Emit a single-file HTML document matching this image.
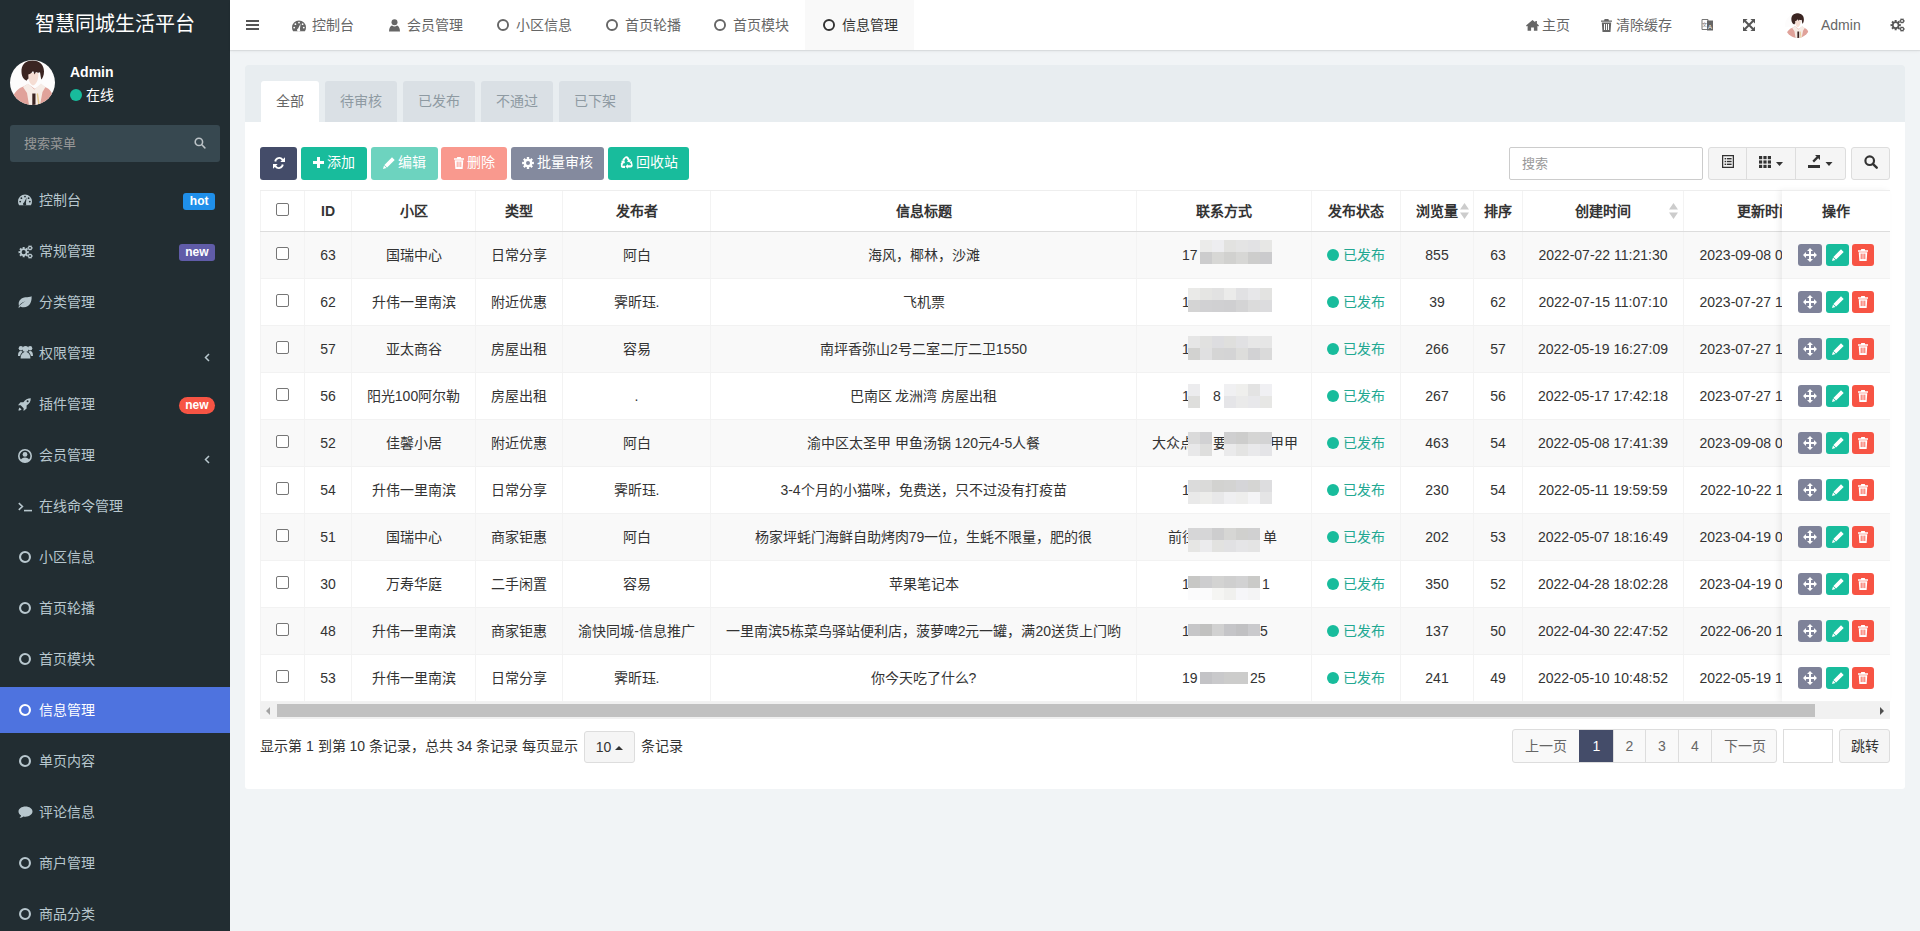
<!DOCTYPE html><html lang="zh-CN"><head><meta charset="utf-8"><title>信息管理</title><style>*{box-sizing:border-box;margin:0;padding:0}
html,body{width:1920px;height:931px;overflow:hidden}
body{font-family:"Liberation Sans",sans-serif;font-size:14px;color:#333;background:#f1f4f6;position:relative}
.abs{position:absolute}
svg{display:block}
#sb{position:absolute;left:0;top:0;width:230px;height:931px;background:#222d32}
#logo{position:absolute;left:0;top:0;width:230px;height:50px;color:#fff;font-size:20px;text-align:center;line-height:49px}
#avatar{position:absolute;left:10px;top:60px;width:45px;height:45px;border-radius:50%;overflow:hidden}
#uname{position:absolute;left:70px;top:63px;color:#fff;font-weight:bold;font-size:14px;line-height:18px}
#ustat{position:absolute;left:70px;top:86px;color:#fff;font-size:14px;line-height:18px}
#ustat i{display:inline-block;width:12px;height:12px;border-radius:50%;background:#18bc9c;margin-right:4px;vertical-align:-1px}
#sbsearch{position:absolute;left:10px;top:125px;width:210px;height:37px;background:#374850;border-radius:3px;color:#999;font-size:13px;line-height:37px}
#sbsearch span{position:absolute;left:14px;top:0}
#sbsearch b{position:absolute;left:184px;top:12px}
.mi{position:absolute;left:0;width:230px;height:46px;color:#b8c7ce;font-size:14px;line-height:47px}
.mi .ic{position:absolute;left:18px;top:17px}
.mi .icc{left:19px;top:17px}
.mi .tx{position:absolute;left:39px;top:0}
.mi.active{background:#4e73df;color:#fff}
.badge{position:absolute;right:15px;top:16px;height:17px;line-height:17px;color:#fff;font-weight:bold;font-size:12px;padding:0 6.5px;border-radius:3px}
.badge.pill{border-radius:9px}
.chev{position:absolute;left:204px;top:23px}
#hd{position:absolute;left:230px;top:0;width:1690px;height:50px;background:#fff;box-shadow:0 1px 1px rgba(0,0,0,.075),0 2px 3px rgba(0,0,0,.03)}
.nv{position:absolute;top:0;height:50px;line-height:50px;color:#666;font-size:14px}
#panel{position:absolute;left:245px;top:65px;width:1660px;height:724px;background:#fff;border-radius:3px}
#ph{position:absolute;left:0;top:0;width:1660px;height:57px;background:#e8edf0;border-radius:3px 3px 0 0}
.tab{position:absolute;top:16px;height:41px;line-height:41px;text-align:center;color:#8e9aa2;background:#dae0e5;font-size:14px;border-radius:3px 3px 0 0}
.tab.on{background:#fff;color:#666}
.btn{position:absolute;top:82px;height:33px;line-height:33px;color:#fff;border-radius:3px;font-size:14px;white-space:nowrap}
.btn svg{display:inline-block;vertical-align:-1px}
table{border-collapse:collapse;table-layout:fixed;position:absolute}
td,th{text-align:center;font-size:14px;white-space:nowrap;overflow:hidden;border-left:1px solid #f0f0f0}
.bin{position:absolute;left:0;top:-1px;width:100%;height:100%;display:flex;align-items:center;justify-content:center}
.bi{display:block}
.bl{display:block;margin-left:3px}
.sinput{position:absolute;top:82px;width:194px;height:33px;border:1px solid #ccc;border-radius:2px;color:#999;line-height:31px;padding-left:12px;background:#fff;font-size:13px}
.bgrp{position:absolute;top:82px;height:33px;border:1px solid #ddd;border-radius:3px;background:#f5f5f5}
.bgrp i{position:absolute;top:0;width:1px;height:31px;background:#ddd}
#tbl{position:absolute;width:1630px;height:512px}
.tr{position:absolute;left:0;width:1630px;height:47px;border-bottom:1px solid #f2f2f2;background:#fff}
.tr.odd{background:#f9f9f9}
.tr.th{height:42px;border-top:1px solid #eee;border-bottom:1px solid #ddd;font-weight:bold}
.td{position:absolute;top:0;height:100%;border-left:1px solid #f3f3f3;text-align:center;white-space:nowrap;overflow:hidden;line-height:46px}
.th .td{line-height:40px}
.cb{position:absolute;left:15px;top:15px;width:13px;height:13px;border:1px solid #767676;border-radius:2px;background:#fff}
.ph{position:relative}
.blur{display:inline-block;width:70px;height:24px;vertical-align:middle;background:#e2e2e2}
.st{color:#22a892}
.st i{display:inline-block;width:12px;height:12px;border-radius:50%;background:#18bc9c;margin-right:4px;vertical-align:-1px}
#tblx{position:absolute;width:1630px;height:512px}
.sarr{position:absolute}
#fixc{position:absolute;top:0;width:108px;height:512px;background:#fff;box-shadow:-3px 0 6px rgba(0,0,0,.06)}
.fh{position:absolute;left:0;top:0;width:108px;height:42px;line-height:40px;text-align:center;font-weight:bold;border-top:1px solid #eee;border-bottom:1px solid #ddd;background:#fff}
.fr{position:absolute;left:0;width:108px;height:47px;border-bottom:1px solid #f2f2f2}
.ab{position:absolute;top:12px;height:22px;border-radius:3px;display:flex;align-items:center;justify-content:center}
#sbar{position:absolute;width:1630px;height:17px;background:#f1f1f1}
#sbar .thumb{position:absolute;left:17px;top:2px;width:1538px;height:13px;background:#c1c1c1}
#sbar .sl{position:absolute;left:6px;top:5px;width:0;height:0;border-top:4px solid transparent;border-bottom:4px solid transparent;border-right:4px solid #a3a3a3}
#sbar .sr{position:absolute;right:6px;top:5px;width:0;height:0;border-top:4px solid transparent;border-bottom:4px solid transparent;border-left:4px solid #505050}
#pinfo{position:absolute;height:33px;line-height:31px;white-space:nowrap}
.psz{display:inline-block;width:51px;height:32px;border:1px solid #ddd;border-radius:3px;background:#f5f5f5;text-align:center;line-height:30px;vertical-align:middle;margin:0 2px}
.psz b{display:inline-block;border-left:4px solid transparent;border-right:4px solid transparent;border-bottom:4px solid #333;vertical-align:2px}
#pgn{position:absolute;left:1267px;top:664px;width:265px;height:34px;border:1px solid #ddd;border-radius:3px;background:#f9f9f9;overflow:hidden}
.pg{position:absolute;top:0;height:32px;line-height:32px;text-align:center;border-left:1px solid #ddd;color:#666}
.pg:first-child{border-left:none}
.pg.on{background:#444c69;color:#fff;border-color:#444c69}
#pjump{position:absolute;top:664px;width:50px;height:34px;border:1px solid #ddd;background:#fff}
#pjbtn{position:absolute;top:664px;width:51px;height:34px;border:1px solid #ddd;border-radius:3px;background:#f5f5f5;text-align:center;line-height:32px;color:#333}
.pht{position:absolute;height:46px;line-height:46px;white-space:nowrap}
.mos{position:absolute;width:12px;height:12px}
.mi .ic-group{top:15px}
</style></head><body><div id="sb"><div id="logo">智慧同城生活平台</div><div id="avatar"><svg width="45" height="45" viewBox="0 0 45 45" style="display:block"><rect width="45" height="45" fill="#fdfcfc"/><path d="M18 13c0 7 2 11.5 5 12.5 3-1 5.5-5 5.5-12.5z" fill="#f5ddd3"/><path d="M11.5 12C11 5 15.5.6 22.5.6S34 5 34 11.5c0 3.8-1.2 6.5-2.8 8l-1.2-7.2c-1.3.6-2.7.5-4-.3l-1.6 2.6c-.3-1.6-.8-2.8-1.5-3.5-.9 1.8-2.6 3-4.6 3.5l.2 3.8c-.8.4-1.5 1.3-1.8 2.4C13 19 11.7 15.8 11.5 12z" fill="#3b2522"/><path d="M3 37c1.5-5 5.5-9 10.5-10.5L18 24l7 5 6-4.5 4 2.5c4.5 1.5 7 5 8 10V45H3z" fill="#e0a29a"/><path d="M13 27l5-3.5 6.5 6 6.5-6 4.5 3.5-3 5-2.5 13h-11l-2-12z" fill="#f6ece6"/><path d="M22.3 33.5h3.2v11.5h-3.2z" fill="#3a2422"/><path d="M28 33l1.8 12h-1.6l-1.5-11z" fill="#e6c98f"/></svg>
</div><div id="uname">Admin</div><div id="ustat"><i></i>在线</div><div id="sbsearch"><span>搜索菜单</span><b><svg width="12" height="12" viewBox="0 0 13 13" fill="currentColor"  style="display:block"><circle cx="5.3" cy="5.3" r="4" fill="none" stroke="#bcc3c7" stroke-width="1.7"/><path d="M8.2 8.2l3.6 3.6" stroke="#bcc3c7" stroke-width="1.6" stroke-linecap="round"/></svg></b></div><div class="mi" style="top:177px"><span class="ic ic-dash"><svg width="14" height="12" viewBox="0 0 14 12" fill="currentColor"  style="display:block"><path d="M7 0.5A7 7 0 0 0 0 7.5c0 1.4.4 2.7 1.1 3.8h11.8A7 7 0 0 0 14 7.5 7 7 0 0 0 7 .5z" fill="#b8c7ce"/><g fill="#222d32"><circle cx="7" cy="2.6" r=".9"/><circle cx="3.4" cy="4.2" r=".9"/><circle cx="2.2" cy="7.6" r=".9"/><circle cx="11.8" cy="7.6" r=".9"/><circle cx="10.6" cy="4.2" r=".9"/><path d="M8.6 3.6 6.1 8.6a1.5 1.5 0 1 0 1.8.6z"/></g></svg></span><span class="tx">控制台</span><span class="badge" style="background:#1f8fea">hot</span></div><div class="mi" style="top:228px"><span class="ic ic-cogs"><svg width="15" height="14" viewBox="0 0 15 14.5" fill="currentColor"  style="display:block"><path d="M9.47 6.41 L10.89 6.30 L10.89 8.50 L9.47 8.39 L9.04 9.44 L10.11 10.36 L8.56 11.91 L7.64 10.84 L6.59 11.27 L6.70 12.69 L4.50 12.69 L4.61 11.27 L3.56 10.84 L2.64 11.91 L1.09 10.36 L2.16 9.44 L1.73 8.39 L0.31 8.50 L0.31 6.30 L1.73 6.41 L2.16 5.36 L1.09 4.44 L2.64 2.89 L3.56 3.96 L4.61 3.53 L4.50 2.11 L6.70 2.11 L6.59 3.53 L7.64 3.96 L8.56 2.89 L10.11 4.44 L9.04 5.36ZM7.70 7.40A2.1 2.1 0 1 0 3.50 7.40A2.1 2.1 0 1 0 7.70 7.40ZM14.18 2.29 L14.89 2.22 L14.89 3.78 L14.18 3.71 L13.80 4.36 L14.22 4.94 L12.87 5.72 L12.57 5.07 L11.83 5.07 L11.53 5.72 L10.18 4.94 L10.60 4.36 L10.22 3.71 L9.51 3.78 L9.51 2.22 L10.22 2.29 L10.60 1.64 L10.18 1.06 L11.53 0.28 L11.83 0.93 L12.57 0.93 L12.87 0.28 L14.22 1.06 L13.80 1.64ZM13.20 3.00A1.0 1.0 0 1 0 11.20 3.00A1.0 1.0 0 1 0 13.20 3.00ZM14.18 10.69 L14.89 10.62 L14.89 12.18 L14.18 12.11 L13.80 12.76 L14.22 13.34 L12.87 14.12 L12.57 13.47 L11.83 13.47 L11.53 14.12 L10.18 13.34 L10.60 12.76 L10.22 12.11 L9.51 12.18 L9.51 10.62 L10.22 10.69 L10.60 10.04 L10.18 9.46 L11.53 8.68 L11.83 9.33 L12.57 9.33 L12.87 8.68 L14.22 9.46 L13.80 10.04ZM13.20 11.40A1.0 1.0 0 1 0 11.20 11.40A1.0 1.0 0 1 0 13.20 11.40Z" fill="#b8c7ce" fill-rule="evenodd"/></svg></span><span class="tx">常规管理</span><span class="badge" style="background:#605ca8">new</span></div><div class="mi" style="top:279px"><span class="ic ic-leaf"><svg width="14" height="12" viewBox="0 0 14 12" fill="currentColor"  style="display:block"><path d="M13.6.3C12 1.5 9.6 1 7.5 1.3 3.5 1.8.7 4.3.7 8c0 .7.1 1.3.3 1.9C1.7 8.6 3.6 6.4 7.5 5.2 4.3 6.8 2 9 .3 11.2l.8.6 1.2-1.4C3.4 11 4.6 11.3 6 11.3 11.4 11.3 14 6.2 13.6.3z" fill="#b8c7ce"/></svg></span><span class="tx">分类管理</span></div><div class="mi" style="top:330px"><span class="ic ic-group"><svg width="15" height="14" viewBox="0 0 15 14" fill="currentColor"  style="display:block"><g fill="#b8c7ce"><circle cx="7.5" cy="4" r="3"/><path d="M2.6 13.6c0-4.2 2-6.6 4.9-6.6s4.9 2.4 4.9 6.6z"/><circle cx="2.9" cy="3.2" r="2.2"/><circle cx="12.1" cy="3.2" r="2.2"/><path d="M0 11c0-3 1-4.9 2.9-4.9.8 0 1.4.3 1.8.6C3.3 7.8 2.4 9.3 2.2 11z"/><path d="M15 11c0-3-1-4.9-2.9-4.9-.8 0-1.4.3-1.8.6 1.4 1.1 2.3 2.6 2.5 4.3z"/></g></svg></span><span class="tx">权限管理</span><span class="chev"><svg width="6" height="9" viewBox="0 0 6 9"><path d="M5 1 1.5 4.5 5 8" fill="none" stroke="#b8c7ce" stroke-width="1.5"/></svg></span></div><div class="mi" style="top:381px"><span class="ic ic-rocket"><svg width="13" height="13" viewBox="0 0 13 13" fill="currentColor"  style="display:block"><path d="M12.8.2C9.5.2 7.3 1.6 5.4 4.3H2.5L0 7.3h2.6l3 3v2.6l3-2.5V7.5C11.4 5.6 12.8 3.5 12.8.2zM9.6 2.3a1 1 0 1 1 0 2 1 1 0 0 1 0-2zM1.6 9.4c-.8.8-1.2 2.9-1.2 3.2.3 0 2.4-.4 3.2-1.2z" fill="#b8c7ce"/></svg></span><span class="tx">插件管理</span><span class="badge pill" style="background:#f75444">new</span></div><div class="mi" style="top:432px"><span class="ic ic-ucirc"><svg width="14" height="14" viewBox="0 0 14 14" fill="currentColor"  style="display:block"><circle cx="7" cy="7" r="6.2" fill="none" stroke="#b8c7ce" stroke-width="1.6"/><circle cx="7" cy="5.4" r="2.4" fill="#b8c7ce"/><path d="M2.6 11.2C3.3 9.4 5 8.4 7 8.4s3.7 1 4.4 2.8A6 6 0 0 1 7 13.2a6 6 0 0 1-4.4-2z" fill="#b8c7ce"/></svg></span><span class="tx">会员管理</span><span class="chev"><svg width="6" height="9" viewBox="0 0 6 9"><path d="M5 1 1.5 4.5 5 8" fill="none" stroke="#b8c7ce" stroke-width="1.5"/></svg></span></div><div class="mi" style="top:483px"><span class="ic ic-term"><svg width="15" height="12" viewBox="0 0 15 12" fill="currentColor"  style="display:block"><path d="M.8 3.2l3.6 3.3-3.6 3.3" fill="none" stroke="#b8c7ce" stroke-width="1.6"/><rect x="6" y="9.8" width="8" height="1.6" fill="#b8c7ce"/></svg></span><span class="tx">在线命令管理</span></div><div class="mi" style="top:534px"><span class="ic icc"><svg width="12" height="12" viewBox="0 0 12 12" fill="currentColor"  style="display:block"><circle cx="6.0" cy="6.0" r="4.95" fill="none" stroke="#b8c7ce" stroke-width="2.1"/></svg></span><span class="tx">小区信息</span></div><div class="mi" style="top:585px"><span class="ic icc"><svg width="12" height="12" viewBox="0 0 12 12" fill="currentColor"  style="display:block"><circle cx="6.0" cy="6.0" r="4.95" fill="none" stroke="#b8c7ce" stroke-width="2.1"/></svg></span><span class="tx">首页轮播</span></div><div class="mi" style="top:636px"><span class="ic icc"><svg width="12" height="12" viewBox="0 0 12 12" fill="currentColor"  style="display:block"><circle cx="6.0" cy="6.0" r="4.95" fill="none" stroke="#b8c7ce" stroke-width="2.1"/></svg></span><span class="tx">首页模块</span></div><div class="mi active" style="top:687px"><span class="ic icc"><svg width="12" height="12" viewBox="0 0 12 12" fill="currentColor"  style="display:block"><circle cx="6.0" cy="6.0" r="4.95" fill="none" stroke="#fff" stroke-width="2.1"/></svg></span><span class="tx">信息管理</span></div><div class="mi" style="top:738px"><span class="ic icc"><svg width="12" height="12" viewBox="0 0 12 12" fill="currentColor"  style="display:block"><circle cx="6.0" cy="6.0" r="4.95" fill="none" stroke="#b8c7ce" stroke-width="2.1"/></svg></span><span class="tx">单页内容</span></div><div class="mi" style="top:789px"><span class="ic ic-comment"><svg width="15" height="12" viewBox="0 0 15 12" fill="currentColor"  style="display:block"><path d="M7.5.5C3.6.5.5 2.8.5 5.6c0 1.6 1 3 2.6 4-.2.9-.8 1.6-1.6 2.1 1.6 0 3-.6 3.9-1.3.7.2 1.4.3 2.1.3 3.9 0 7-2.3 7-5.1S11.4.5 7.5.5z" fill="#b8c7ce"/></svg></span><span class="tx">评论信息</span></div><div class="mi" style="top:840px"><span class="ic icc"><svg width="12" height="12" viewBox="0 0 12 12" fill="currentColor"  style="display:block"><circle cx="6.0" cy="6.0" r="4.95" fill="none" stroke="#b8c7ce" stroke-width="2.1"/></svg></span><span class="tx">商户管理</span></div><div class="mi" style="top:891px"><span class="ic icc"><svg width="12" height="12" viewBox="0 0 12 12" fill="currentColor"  style="display:block"><circle cx="6.0" cy="6.0" r="4.95" fill="none" stroke="#b8c7ce" stroke-width="2.1"/></svg></span><span class="tx">商品分类</span></div></div><div id="hd"><div class="abs" style="left:16px;top:20px"><svg width="13" height="10" viewBox="0 0 13 10" fill="#555"  style="display:block"><rect x="0" y="0" width="13" height="2"/><rect x="0" y="4" width="13" height="2"/><rect x="0" y="8" width="13" height="2"/></svg></div><div class="abs hdact" style="left:575px;top:0;width:109px;height:50px;background:#f9f9f9"></div><div class="abs" style="left:62px;top:20px"><svg width="14" height="12" viewBox="0 0 14 12" fill="currentColor"  style="display:block"><path d="M7 0.5A7 7 0 0 0 0 7.5c0 1.4.4 2.7 1.1 3.8h11.8A7 7 0 0 0 14 7.5 7 7 0 0 0 7 .5z" fill="#666"/><g fill="#fff"><circle cx="7" cy="2.6" r=".9"/><circle cx="3.4" cy="4.2" r=".9"/><circle cx="2.2" cy="7.6" r=".9"/><circle cx="11.8" cy="7.6" r=".9"/><circle cx="10.6" cy="4.2" r=".9"/><path d="M8.6 3.6 6.1 8.6a1.5 1.5 0 1 0 1.8.6z"/></g></svg></div><div class="nv" style="left:82px;color:#666">控制台</div><div class="abs" style="left:159px;top:19px"><svg width="11" height="13" viewBox="0 0 11 13" fill="currentColor"  style="display:block"><circle cx="5.5" cy="3.3" r="3" fill="#666"/><path d="M0 12.5c0-3.4 1.6-5.6 3-5.9.8.6 1.6.9 2.5.9s1.7-.3 2.5-.9c1.4.3 3 2.5 3 5.9z" fill="#666"/></svg></div><div class="nv" style="left:177px;color:#666">会员管理</div><div class="abs" style="left:267px;top:19px"><svg width="12" height="12" viewBox="0 0 12 12" fill="currentColor"  style="display:block"><circle cx="6.0" cy="6.0" r="5.05" fill="none" stroke="#666" stroke-width="1.9"/></svg></div><div class="nv" style="left:286px;color:#666">小区信息</div><div class="abs" style="left:376px;top:19px"><svg width="12" height="12" viewBox="0 0 12 12" fill="currentColor"  style="display:block"><circle cx="6.0" cy="6.0" r="5.05" fill="none" stroke="#666" stroke-width="1.9"/></svg></div><div class="nv" style="left:395px;color:#666">首页轮播</div><div class="abs" style="left:484px;top:19px"><svg width="12" height="12" viewBox="0 0 12 12" fill="currentColor"  style="display:block"><circle cx="6.0" cy="6.0" r="5.05" fill="none" stroke="#666" stroke-width="1.9"/></svg></div><div class="nv" style="left:503px;color:#666">首页模块</div><div class="abs" style="left:593px;top:19px"><svg width="12" height="12" viewBox="0 0 12 12" fill="currentColor"  style="display:block"><circle cx="6.0" cy="6.0" r="5.05" fill="none" stroke="#333" stroke-width="1.9"/></svg></div><div class="nv" style="left:612px;color:#333">信息管理</div><div class="abs" style="left:1296px;top:20px"><svg width="13" height="11" viewBox="0 0 13 11" fill="currentColor"  style="display:block"><path d="M6.5 1.6 1.6 5.7v5h3.5V7.6h2.8v3.1h3.5v-5zM6.5 0 0 5.4l.8 1 5.7-4.8 5.7 4.8.8-1L10.9 3.6V1H9.3v1.3z" fill="#666"/></svg></div><div class="nv" style="left:1312px">主页</div><div class="abs" style="left:1371px;top:19px"><svg width="11" height="13" viewBox="0 0 11 13" fill="currentColor"  style="display:block"><path d="M3.6 0h3.8l.5 1.4H11v1.4H0V1.4h3.1zM.8 3.6h9.4l-.7 9.4h-8z" fill="#666"/><g fill="#fff"><rect x="3" y="5" width="1" height="6"/><rect x="5" y="5" width="1" height="6"/><rect x="7" y="5" width="1" height="6"/></g></svg></div><div class="nv" style="left:1386px">清除缓存</div><div class="abs" style="left:1471px;top:18px"><svg width="13" height="14" viewBox="0 0 13 14" fill="currentColor"  style="display:block"><path d="M1 1.5h6v10H1z" fill="#fff" stroke="#777" stroke-width="1"/><path d="M6 2.5h6v10H6z" fill="#666"/><text x="9" y="10.5" font-size="6" fill="#fff" text-anchor="middle" font-family="Liberation Sans">A</text><text x="3.8" y="7.5" font-size="5" fill="#777" text-anchor="middle" font-family="Liberation Sans">文</text></svg></div><div class="abs" style="left:1513px;top:19px"><svg width="12" height="12" viewBox="0 0 12 12" fill="currentColor"  style="display:block"><g fill="#555"><path d="M0 0h4.6L0 4.6z"/><path d="M12 0v4.6L7.4 0z"/><path d="M0 12V7.4L4.6 12z"/><path d="M12 12H7.4L12 7.4z"/></g><path d="M2 2l8 8M10 2l-8 8" stroke="#555" stroke-width="2"/></svg></div><div class="abs" style="left:1555px;top:13px;width:25px;height:25px;border-radius:50%;overflow:hidden"><svg width="25" height="25" viewBox="0 0 45 45" style="display:block"><rect width="25" height="25" fill="#fdfcfc"/><path d="M18 13c0 7 2 11.5 5 12.5 3-1 5.5-5 5.5-12.5z" fill="#f5ddd3"/><path d="M11.5 12C11 5 15.5.6 22.5.6S34 5 34 11.5c0 3.8-1.2 6.5-2.8 8l-1.2-7.2c-1.3.6-2.7.5-4-.3l-1.6 2.6c-.3-1.6-.8-2.8-1.5-3.5-.9 1.8-2.6 3-4.6 3.5l.2 3.8c-.8.4-1.5 1.3-1.8 2.4C13 19 11.7 15.8 11.5 12z" fill="#3b2522"/><path d="M3 37c1.5-5 5.5-9 10.5-10.5L18 24l7 5 6-4.5 4 2.5c4.5 1.5 7 5 8 10V45H3z" fill="#e0a29a"/><path d="M13 27l5-3.5 6.5 6 6.5-6 4.5 3.5-3 5-2.5 13h-11l-2-12z" fill="#f6ece6"/><path d="M22.3 33.5h3.2v11.5h-3.2z" fill="#3a2422"/><path d="M28 33l1.8 12h-1.6l-1.5-11z" fill="#e6c98f"/></svg>
</div><div class="nv" style="left:1591px">Admin</div><div class="abs" style="left:1660px;top:18px"><svg width="15" height="14" viewBox="0 0 15 14.5" fill="currentColor"  style="display:block"><path d="M9.47 6.41 L10.89 6.30 L10.89 8.50 L9.47 8.39 L9.04 9.44 L10.11 10.36 L8.56 11.91 L7.64 10.84 L6.59 11.27 L6.70 12.69 L4.50 12.69 L4.61 11.27 L3.56 10.84 L2.64 11.91 L1.09 10.36 L2.16 9.44 L1.73 8.39 L0.31 8.50 L0.31 6.30 L1.73 6.41 L2.16 5.36 L1.09 4.44 L2.64 2.89 L3.56 3.96 L4.61 3.53 L4.50 2.11 L6.70 2.11 L6.59 3.53 L7.64 3.96 L8.56 2.89 L10.11 4.44 L9.04 5.36ZM7.70 7.40A2.1 2.1 0 1 0 3.50 7.40A2.1 2.1 0 1 0 7.70 7.40ZM14.18 2.29 L14.89 2.22 L14.89 3.78 L14.18 3.71 L13.80 4.36 L14.22 4.94 L12.87 5.72 L12.57 5.07 L11.83 5.07 L11.53 5.72 L10.18 4.94 L10.60 4.36 L10.22 3.71 L9.51 3.78 L9.51 2.22 L10.22 2.29 L10.60 1.64 L10.18 1.06 L11.53 0.28 L11.83 0.93 L12.57 0.93 L12.87 0.28 L14.22 1.06 L13.80 1.64ZM13.20 3.00A1.0 1.0 0 1 0 11.20 3.00A1.0 1.0 0 1 0 13.20 3.00ZM14.18 10.69 L14.89 10.62 L14.89 12.18 L14.18 12.11 L13.80 12.76 L14.22 13.34 L12.87 14.12 L12.57 13.47 L11.83 13.47 L11.53 14.12 L10.18 13.34 L10.60 12.76 L10.22 12.11 L9.51 12.18 L9.51 10.62 L10.22 10.69 L10.60 10.04 L10.18 9.46 L11.53 8.68 L11.83 9.33 L12.57 9.33 L12.87 8.68 L14.22 9.46 L13.80 10.04ZM13.20 11.40A1.0 1.0 0 1 0 11.20 11.40A1.0 1.0 0 1 0 13.20 11.40Z" fill="#555" fill-rule="evenodd"/></svg></div></div><div id="panel"><div id="ph"></div><div class="tab on" style="left:16px;width:58px">全部</div><div class="tab" style="left:80px;width:72px">待审核</div><div class="tab" style="left:158px;width:72px">已发布</div><div class="tab" style="left:236px;width:72px">不通过</div><div class="tab" style="left:314px;width:72px">已下架</div><div class="btn" style="left:15px;width:37px;background:#444c69"><div class="bin"><span class="bi"><svg width="12" height="12" viewBox="0 0 12 12" fill="currentColor"  style="display:block"><path d="M10.2 2A5 5 0 0 0 1.3 4.2l1.9.6A3 3 0 0 1 8.8 3.4L7.3 4.9H12V.2zM1.8 10A5 5 0 0 0 10.7 7.8l-1.9-.6A3 3 0 0 1 3.2 8.6l1.5-1.5H0v4.7z" fill="#fff"/></svg></span></div></div><div class="btn" style="left:56px;width:66px;background:#18bc9c"><div class="bin"><span class="bi"><svg width="11" height="11" viewBox="0 0 11 11" fill="currentColor"  style="display:block"><path d="M4 0h3v4h4v3H7v4H4V7H0V4h4z" fill="#fff"/></svg></span><span class="bl">添加</span></div></div><div class="btn" style="left:126px;width:67px;background:#6dd3bf"><div class="bin"><span class="bi"><svg width="12" height="12" viewBox="0 0 12 12" fill="currentColor"  style="display:block"><path d="M9 .3l2.7 2.7-7.6 7.6-2.7-2.7zM1 8.5l2.5 2.5L0 12z" fill="#fff"/></svg></span><span class="bl">编辑</span></div></div><div class="btn" style="left:196px;width:66px;background:#f9998e"><div class="bin"><span class="bi"><svg width="10" height="12" viewBox="0 0 11 13" fill="currentColor"  style="display:block"><path d="M3.6 0h3.8l.5 1.4H11v1.4H0V1.4h3.1zM.8 3.6h9.4l-.7 9.4h-8z" fill="#fff"/><g fill="#f9998e"><rect x="3" y="5" width="1" height="6"/><rect x="5" y="5" width="1" height="6"/><rect x="7" y="5" width="1" height="6"/></g></svg></span><span class="bl">删除</span></div></div><div class="btn" style="left:266px;width:93px;background:#848a9e"><div class="bin"><span class="bi"><svg width="12" height="12" viewBox="0 0 12 12" fill="currentColor"  style="display:block"><path d="M10.36 4.88 L11.88 4.78 L11.88 7.22 L10.36 7.12 L9.87 8.29 L11.01 9.29 L9.29 11.01 L8.29 9.87 L7.12 10.36 L7.22 11.88 L4.78 11.88 L4.88 10.36 L3.71 9.87 L2.71 11.01 L0.99 9.29 L2.13 8.29 L1.64 7.12 L0.12 7.22 L0.12 4.78 L1.64 4.88 L2.13 3.71 L0.99 2.71 L2.71 0.99 L3.71 2.13 L4.88 1.64 L4.78 0.12 L7.22 0.12 L7.12 1.64 L8.29 2.13 L9.29 0.99 L11.01 2.71 L9.87 3.71ZM8.00 6.00A2 2 0 1 0 4.00 6.00A2 2 0 1 0 8.00 6.00Z" fill="#fff" fill-rule="evenodd"/></svg></span><span class="bl">批量审核</span></div></div><div class="btn" style="left:363px;width:81px;background:#18bc9c"><div class="bin"><span class="bi"><svg width="13" height="13" viewBox="0 0 13 13" fill="currentColor"  style="display:block"><g fill="#fff"><path d="M4.6 1.2C5.1.5 5.8.2 6.5.2s1.4.3 1.9 1l1.5 2.5 1.2-.7-.9 3.4-3.4-.9 1.2-.7-1.5-2.5c-.1-.2-.3-.3-.5-.3s-.3.1-.4.3L4.3 4.6 2.3 3.4z"/><path d="M12.4 8.1c.4.8.4 1.6 0 2.3-.4.6-1 1-1.8 1H7.8v1.4L5.4 10.4 7.8 7.9v1.4h2.8c.2 0 .4-.1.5-.3.1-.2.1-.4 0-.5l-1.3-2.3 2-1.2z"/><path d="M.6 8.1l1.4-2.4-1.2-.7 3.4-1L5.1 7.4 3.9 6.7 2.5 9c-.1.2-.1.4 0 .5.1.2.3.3.5.3H5v2.2H3c-.8 0-1.5-.4-1.9-1-.4-.7-.4-1.6 0-2.3z"/></g></svg></span><span class="bl">回收站</span></div></div><div class="sinput" style="left:1264px">搜索</div><div class="bgrp" style="left:1463px;width:138px"><i style="left:37px"></i><i style="left:86px"></i><span class="abs" style="left:13px;top:7px"><svg width="12" height="13" viewBox="0 0 12 13" fill="#333"  style="display:block"><rect x=".6" y=".6" width="10.8" height="11.8" fill="none" stroke="#333" stroke-width="1.3"/><rect x="2.6" y="3" width="1.4" height="1.4"/><rect x="4.8" y="3" width="4.8" height="1.4"/><rect x="2.6" y="5.8" width="1.4" height="1.4"/><rect x="4.8" y="5.8" width="4.8" height="1.4"/><rect x="2.6" y="8.6" width="1.4" height="1.4"/><rect x="4.8" y="8.6" width="4.8" height="1.4"/></svg></span><span class="abs" style="left:50px;top:8px"><svg width="25" height="13" viewBox="0 0 25 13" fill="currentColor"  style="display:block"><g fill="#333"><rect x="0" y="0" width="3.2" height="3.2"/><rect x="4.4" y="0" width="3.2" height="3.2"/><rect x="8.8" y="0" width="3.2" height="3.2"/><rect x="0" y="4.4" width="3.2" height="3.2"/><rect x="4.4" y="4.4" width="3.2" height="3.2"/><rect x="8.8" y="4.4" width="3.2" height="3.2"/><rect x="0" y="8.8" width="3.2" height="3.2"/><rect x="4.4" y="8.8" width="3.2" height="3.2"/><rect x="8.8" y="8.8" width="3.2" height="3.2"/><path d="M17 6h7l-3.5 4z"/></g></svg></span><span class="abs" style="left:99px;top:7px"><svg width="26" height="13" viewBox="0 0 26 13" fill="currentColor"  style="display:block"><g fill="#333"><path d="M7 0h5v5l-1.8-1.8-4.2 4.2-1.6-1.6 4.2-4.2z"/><rect x="0" y="10" width="12" height="3"/><path d="M17.5 7h7l-3.5 4z"/></g></svg></span></div><div class="bgrp" style="left:1606px;width:39px"><span class="abs" style="left:12px;top:7px"><svg width="14" height="14" viewBox="0 0 13 13" fill="currentColor"  style="display:block"><circle cx="5.3" cy="5.3" r="4" fill="none" stroke="#333" stroke-width="2"/><path d="M8.2 8.2l3.6 3.6" stroke="#333" stroke-width="2.2" stroke-linecap="round"/></svg></span></div><div id="tbl" style="left:15px;top:125px"><div class="tr th" style="top:0"><div class="td" style="left:0px;width:44px"><span class="cb" style="top:12px"></span></div><div class="td" style="left:44px;width:47px">ID</div><div class="td" style="left:91px;width:124px">小区</div><div class="td" style="left:215px;width:87px">类型</div><div class="td" style="left:302px;width:148px">发布者</div><div class="td" style="left:450px;width:426px">信息标题</div><div class="td" style="left:876px;width:175px">联系方式</div><div class="td" style="left:1051px;width:89px">发布状态</div><div class="td" style="left:1140px;width:73px">浏览量</div><div class="td" style="left:1213px;width:49px">排序</div><div class="td" style="left:1262px;width:161px">创建时间</div><div class="td" style="left:1423px;width:162px">更新时间</div></div><div class="tr odd" style="top:42px"><div class="td" style="left:0px;width:44px"><span class="cb"></span></div><div class="td" style="left:44px;width:47px">63</div><div class="td" style="left:91px;width:124px">国瑞中心</div><div class="td" style="left:215px;width:87px">日常分享</div><div class="td" style="left:302px;width:148px">阿白</div><div class="td" style="left:450px;width:426px">海风，椰林，沙滩</div><div class="td" style="left:876px;width:175px"></div><div class="td st" style="left:1051px;width:89px"><i></i>已发布</div><div class="td" style="left:1140px;width:73px">855</div><div class="td" style="left:1213px;width:49px">63</div><div class="td" style="left:1262px;width:161px">2022-07-22 11:21:30</div><div class="td" style="left:1423px;width:162px">2023-09-08 09:21:30</div></div><div class="tr" style="top:89px"><div class="td" style="left:0px;width:44px"><span class="cb"></span></div><div class="td" style="left:44px;width:47px">62</div><div class="td" style="left:91px;width:124px">升伟一里南滨</div><div class="td" style="left:215px;width:87px">附近优惠</div><div class="td" style="left:302px;width:148px">霁昕珏.</div><div class="td" style="left:450px;width:426px">飞机票</div><div class="td" style="left:876px;width:175px"></div><div class="td st" style="left:1051px;width:89px"><i></i>已发布</div><div class="td" style="left:1140px;width:73px">39</div><div class="td" style="left:1213px;width:49px">62</div><div class="td" style="left:1262px;width:161px">2022-07-15 11:07:10</div><div class="td" style="left:1423px;width:162px">2023-07-27 14:01:12</div></div><div class="tr odd" style="top:136px"><div class="td" style="left:0px;width:44px"><span class="cb"></span></div><div class="td" style="left:44px;width:47px">57</div><div class="td" style="left:91px;width:124px">亚太商谷</div><div class="td" style="left:215px;width:87px">房屋出租</div><div class="td" style="left:302px;width:148px">容易</div><div class="td" style="left:450px;width:426px">南坪香弥山2号二室二厅二卫1550</div><div class="td" style="left:876px;width:175px"></div><div class="td st" style="left:1051px;width:89px"><i></i>已发布</div><div class="td" style="left:1140px;width:73px">266</div><div class="td" style="left:1213px;width:49px">57</div><div class="td" style="left:1262px;width:161px">2022-05-19 16:27:09</div><div class="td" style="left:1423px;width:162px">2023-07-27 14:01:12</div></div><div class="tr" style="top:183px"><div class="td" style="left:0px;width:44px"><span class="cb"></span></div><div class="td" style="left:44px;width:47px">56</div><div class="td" style="left:91px;width:124px">阳光100阿尔勒</div><div class="td" style="left:215px;width:87px">房屋出租</div><div class="td" style="left:302px;width:148px">.</div><div class="td" style="left:450px;width:426px">巴南区 龙洲湾 房屋出租</div><div class="td" style="left:876px;width:175px"></div><div class="td st" style="left:1051px;width:89px"><i></i>已发布</div><div class="td" style="left:1140px;width:73px">267</div><div class="td" style="left:1213px;width:49px">56</div><div class="td" style="left:1262px;width:161px">2022-05-17 17:42:18</div><div class="td" style="left:1423px;width:162px">2023-07-27 14:01:12</div></div><div class="tr odd" style="top:230px"><div class="td" style="left:0px;width:44px"><span class="cb"></span></div><div class="td" style="left:44px;width:47px">52</div><div class="td" style="left:91px;width:124px">佳馨小居</div><div class="td" style="left:215px;width:87px">附近优惠</div><div class="td" style="left:302px;width:148px">阿白</div><div class="td" style="left:450px;width:426px">渝中区太圣甲 甲鱼汤锅 120元4-5人餐</div><div class="td" style="left:876px;width:175px"></div><div class="td st" style="left:1051px;width:89px"><i></i>已发布</div><div class="td" style="left:1140px;width:73px">463</div><div class="td" style="left:1213px;width:49px">54</div><div class="td" style="left:1262px;width:161px">2022-05-08 17:41:39</div><div class="td" style="left:1423px;width:162px">2023-09-08 09:21:30</div></div><div class="tr" style="top:277px"><div class="td" style="left:0px;width:44px"><span class="cb"></span></div><div class="td" style="left:44px;width:47px">54</div><div class="td" style="left:91px;width:124px">升伟一里南滨</div><div class="td" style="left:215px;width:87px">日常分享</div><div class="td" style="left:302px;width:148px">霁昕珏.</div><div class="td" style="left:450px;width:426px">3-4个月的小猫咪，免费送，只不过没有打疫苗</div><div class="td" style="left:876px;width:175px"></div><div class="td st" style="left:1051px;width:89px"><i></i>已发布</div><div class="td" style="left:1140px;width:73px">230</div><div class="td" style="left:1213px;width:49px">54</div><div class="td" style="left:1262px;width:161px">2022-05-11 19:59:59</div><div class="td" style="left:1423px;width:162px">2022-10-22 11:22:01</div></div><div class="tr odd" style="top:324px"><div class="td" style="left:0px;width:44px"><span class="cb"></span></div><div class="td" style="left:44px;width:47px">51</div><div class="td" style="left:91px;width:124px">国瑞中心</div><div class="td" style="left:215px;width:87px">商家钜惠</div><div class="td" style="left:302px;width:148px">阿白</div><div class="td" style="left:450px;width:426px">杨家坪蚝门海鲜自助烤肉79一位，生蚝不限量，肥的很</div><div class="td" style="left:876px;width:175px"></div><div class="td st" style="left:1051px;width:89px"><i></i>已发布</div><div class="td" style="left:1140px;width:73px">202</div><div class="td" style="left:1213px;width:49px">53</div><div class="td" style="left:1262px;width:161px">2022-05-07 18:16:49</div><div class="td" style="left:1423px;width:162px">2023-04-19 09:15:42</div></div><div class="tr" style="top:371px"><div class="td" style="left:0px;width:44px"><span class="cb"></span></div><div class="td" style="left:44px;width:47px">30</div><div class="td" style="left:91px;width:124px">万寿华庭</div><div class="td" style="left:215px;width:87px">二手闲置</div><div class="td" style="left:302px;width:148px">容易</div><div class="td" style="left:450px;width:426px">苹果笔记本</div><div class="td" style="left:876px;width:175px"></div><div class="td st" style="left:1051px;width:89px"><i></i>已发布</div><div class="td" style="left:1140px;width:73px">350</div><div class="td" style="left:1213px;width:49px">52</div><div class="td" style="left:1262px;width:161px">2022-04-28 18:02:28</div><div class="td" style="left:1423px;width:162px">2023-04-19 09:15:42</div></div><div class="tr odd" style="top:418px"><div class="td" style="left:0px;width:44px"><span class="cb"></span></div><div class="td" style="left:44px;width:47px">48</div><div class="td" style="left:91px;width:124px">升伟一里南滨</div><div class="td" style="left:215px;width:87px">商家钜惠</div><div class="td" style="left:302px;width:148px">渝快同城-信息推广</div><div class="td" style="left:450px;width:426px">一里南滨5栋菜鸟驿站便利店，菠萝啤2元一罐，满20送货上门哟</div><div class="td" style="left:876px;width:175px"></div><div class="td st" style="left:1051px;width:89px"><i></i>已发布</div><div class="td" style="left:1140px;width:73px">137</div><div class="td" style="left:1213px;width:49px">50</div><div class="td" style="left:1262px;width:161px">2022-04-30 22:47:52</div><div class="td" style="left:1423px;width:162px">2022-06-20 15:32:11</div></div><div class="tr" style="top:465px"><div class="td" style="left:0px;width:44px"><span class="cb"></span></div><div class="td" style="left:44px;width:47px">53</div><div class="td" style="left:91px;width:124px">升伟一里南滨</div><div class="td" style="left:215px;width:87px">日常分享</div><div class="td" style="left:302px;width:148px">霁昕珏.</div><div class="td" style="left:450px;width:426px">你今天吃了什么?</div><div class="td" style="left:876px;width:175px"></div><div class="td st" style="left:1051px;width:89px"><i></i>已发布</div><div class="td" style="left:1140px;width:73px">241</div><div class="td" style="left:1213px;width:49px">49</div><div class="td" style="left:1262px;width:161px">2022-05-10 10:48:52</div><div class="td" style="left:1423px;width:162px">2022-05-19 10:12:45</div></div><span class="pht" style="left:922px;top:42px">17</span><span class="pht" style="left:922px;top:89px">1</span><span class="pht" style="left:922px;top:136px">1</span><span class="pht" style="left:922px;top:183px">1</span><span class="pht" style="left:953px;top:183px">8</span><span class="pht" style="left:892px;top:230px">大众点评</span><span class="pht" style="left:953px;top:230px">要</span><span class="pht" style="left:1010px;top:230px">甲甲</span><span class="pht" style="left:922px;top:277px">1</span><span class="pht" style="left:908px;top:324px">前往</span><span class="pht" style="left:1003px;top:324px">单</span><span class="pht" style="left:922px;top:371px">1</span><span class="pht" style="left:1002px;top:371px">1</span><span class="pht" style="left:922px;top:418px">1</span><span class="pht" style="left:1000px;top:418px">5</span><span class="pht" style="left:922px;top:465px">19</span><span class="pht" style="left:990px;top:465px">25</span><i class="mos" style="left:940px;top:50px;background:#ebebea"></i><i class="mos" style="left:952px;top:50px;background:#ededf0"></i><i class="mos" style="left:964px;top:50px;background:#e2e2e0"></i><i class="mos" style="left:976px;top:50px;background:#e4e4e4"></i><i class="mos" style="left:988px;top:50px;background:#e2e2e4"></i><i class="mos" style="left:1000px;top:50px;background:#e7e7e5"></i><i class="mos" style="left:940px;top:62px;background:#cccccd"></i><i class="mos" style="left:952px;top:62px;background:#d7d7d5"></i><i class="mos" style="left:964px;top:62px;background:#d1d1cf"></i><i class="mos" style="left:976px;top:62px;background:#d7d7d5"></i><i class="mos" style="left:988px;top:62px;background:#cdcdcc"></i><i class="mos" style="left:1000px;top:62px;background:#cbcbcd"></i><i class="mos" style="left:928px;top:98px;background:#eaeae8"></i><i class="mos" style="left:940px;top:98px;background:#e5e5e3"></i><i class="mos" style="left:952px;top:98px;background:#e2e2e2"></i><i class="mos" style="left:964px;top:98px;background:#ebebea"></i><i class="mos" style="left:976px;top:98px;background:#e1e1e3"></i><i class="mos" style="left:988px;top:98px;background:#e7e7e9"></i><i class="mos" style="left:1000px;top:98px;background:#e3e3e1"></i><i class="mos" style="left:928px;top:110px;background:#d4d4d4"></i><i class="mos" style="left:940px;top:110px;background:#d1d1d3"></i><i class="mos" style="left:952px;top:110px;background:#d0d0d2"></i><i class="mos" style="left:964px;top:110px;background:#cfcfd1"></i><i class="mos" style="left:976px;top:110px;background:#d4d4d5"></i><i class="mos" style="left:988px;top:110px;background:#dbdbdb"></i><i class="mos" style="left:1000px;top:110px;background:#dcdcde"></i><i class="mos" style="left:928px;top:146px;background:#e6e6e6"></i><i class="mos" style="left:940px;top:146px;background:#e1e1e0"></i><i class="mos" style="left:952px;top:146px;background:#dddde0"></i><i class="mos" style="left:964px;top:146px;background:#dfdfdd"></i><i class="mos" style="left:976px;top:146px;background:#e1e1e3"></i><i class="mos" style="left:988px;top:146px;background:#e7e7e7"></i><i class="mos" style="left:1000px;top:146px;background:#e6e6e6"></i><i class="mos" style="left:928px;top:158px;background:#d2d2d0"></i><i class="mos" style="left:940px;top:158px;background:#e0e0e1"></i><i class="mos" style="left:952px;top:158px;background:#d5d5d5"></i><i class="mos" style="left:964px;top:158px;background:#d4d4d5"></i><i class="mos" style="left:976px;top:158px;background:#dddddb"></i><i class="mos" style="left:988px;top:158px;background:#d2d2d4"></i><i class="mos" style="left:1000px;top:158px;background:#dadada"></i><i class="mos" style="left:928px;top:194px;background:#ececee"></i><i class="mos" style="left:964px;top:194px;background:#f0f0f2"></i><i class="mos" style="left:976px;top:194px;background:#efefed"></i><i class="mos" style="left:988px;top:194px;background:#e3e3e3"></i><i class="mos" style="left:1000px;top:194px;background:#f0f0f3"></i><i class="mos" style="left:928px;top:206px;background:#dededc"></i><i class="mos" style="left:964px;top:206px;background:#e5e5e8"></i><i class="mos" style="left:976px;top:206px;background:#eaeaea"></i><i class="mos" style="left:988px;top:206px;background:#e8e8eb"></i><i class="mos" style="left:1000px;top:206px;background:#e7e7e5"></i><i class="mos" style="left:928px;top:242px;background:#dadada"></i><i class="mos" style="left:940px;top:242px;background:#d1d1d3"></i><i class="mos" style="left:964px;top:242px;background:#cfcfd0"></i><i class="mos" style="left:976px;top:242px;background:#cdcdcc"></i><i class="mos" style="left:988px;top:242px;background:#d5d5d4"></i><i class="mos" style="left:1000px;top:242px;background:#d3d3d4"></i><i class="mos" style="left:928px;top:254px;background:#e8e8e9"></i><i class="mos" style="left:940px;top:254px;background:#dededd"></i><i class="mos" style="left:964px;top:254px;background:#eaeaeb"></i><i class="mos" style="left:976px;top:254px;background:#e4e4e3"></i><i class="mos" style="left:988px;top:254px;background:#e9e9eb"></i><i class="mos" style="left:1000px;top:254px;background:#e4e4e7"></i><i class="mos" style="left:928px;top:290px;background:#dbdbdb"></i><i class="mos" style="left:940px;top:290px;background:#dadad9"></i><i class="mos" style="left:952px;top:290px;background:#d2d2d0"></i><i class="mos" style="left:964px;top:290px;background:#d3d3d2"></i><i class="mos" style="left:976px;top:290px;background:#d5d5d8"></i><i class="mos" style="left:988px;top:290px;background:#d5d5d3"></i><i class="mos" style="left:1000px;top:290px;background:#dddddf"></i><i class="mos" style="left:928px;top:302px;background:#e9e9e9"></i><i class="mos" style="left:940px;top:302px;background:#ededeb"></i><i class="mos" style="left:952px;top:302px;background:#e8e8e9"></i><i class="mos" style="left:964px;top:302px;background:#efeff1"></i><i class="mos" style="left:976px;top:302px;background:#eeeeed"></i><i class="mos" style="left:988px;top:302px;background:#f4f4f6"></i><i class="mos" style="left:1000px;top:302px;background:#e5e5e6"></i><i class="mos" style="left:928px;top:338px;background:#d6d6d7"></i><i class="mos" style="left:940px;top:338px;background:#d6d6d7"></i><i class="mos" style="left:952px;top:338px;background:#cdcdce"></i><i class="mos" style="left:964px;top:338px;background:#d6d6d4"></i><i class="mos" style="left:976px;top:338px;background:#d0d0ce"></i><i class="mos" style="left:988px;top:338px;background:#d0d0d1"></i><i class="mos" style="left:928px;top:350px;background:#e6e6e4"></i><i class="mos" style="left:940px;top:350px;background:#ebebed"></i><i class="mos" style="left:952px;top:350px;background:#e2e2e0"></i><i class="mos" style="left:964px;top:350px;background:#e1e1e3"></i><i class="mos" style="left:976px;top:350px;background:#e5e5e7"></i><i class="mos" style="left:988px;top:350px;background:#e4e4e4"></i><i class="mos" style="left:928px;top:386px;background:#c7c7c5"></i><i class="mos" style="left:940px;top:386px;background:#cdcdcf"></i><i class="mos" style="left:952px;top:386px;background:#d3d3d2"></i><i class="mos" style="left:964px;top:386px;background:#cfcfcf"></i><i class="mos" style="left:976px;top:386px;background:#d2d2d3"></i><i class="mos" style="left:988px;top:386px;background:#cacac8"></i><i class="mos" style="left:928px;top:398px;background:#fbfbfc"></i><i class="mos" style="left:940px;top:398px;background:#fbfbfc"></i><i class="mos" style="left:952px;top:398px;background:#f5f5f3"></i><i class="mos" style="left:964px;top:398px;background:#f0f0ee"></i><i class="mos" style="left:976px;top:398px;background:#f6f6f9"></i><i class="mos" style="left:988px;top:398px;background:#f4f4f5"></i><i class="mos" style="left:928px;top:434px;background:#c6c6c8"></i><i class="mos" style="left:940px;top:434px;background:#c1c1c0"></i><i class="mos" style="left:952px;top:434px;background:#d1d1d1"></i><i class="mos" style="left:964px;top:434px;background:#c5c5c8"></i><i class="mos" style="left:976px;top:434px;background:#c1c1c3"></i><i class="mos" style="left:988px;top:434px;background:#cacacd"></i><i class="mos" style="left:940px;top:482px;background:#c3c3c6"></i><i class="mos" style="left:952px;top:482px;background:#c9c9cb"></i><i class="mos" style="left:964px;top:482px;background:#cccccb"></i><i class="mos" style="left:976px;top:482px;background:#cccccb"></i></div><div id="tblx" style="left:15px;top:125px"><span class="sarr" style="left:1200px;top:13px"><svg width="9" height="16" viewBox="0 0 9 16" fill="currentColor"  style="display:block"><path d="M4.5 0 9 6.5H0zM4.5 16 0 9.5h9z" fill="#ccc"/></svg></span><span class="sarr" style="left:1409px;top:13px"><svg width="9" height="16" viewBox="0 0 9 16" fill="currentColor"  style="display:block"><path d="M4.5 0 9 6.5H0zM4.5 16 0 9.5h9z" fill="#ccc"/></svg></span><div id="fixc" style="left:1522px"><div class="fh">操作</div><div class="fr" style="top:42px;background:#f9f9f9"><span class="ab" style="left:16px;width:24px;background:#7e8299"><svg width="14" height="14" viewBox="0 0 14 14" fill="currentColor"  style="display:block"><path d="M7 0l3 3H8v3h3V4l3 3-3 3V8H8v3h2l-3 3-3-3h2V8H3v2L0 7l3-3v2h3V3H4z" fill="#fff"/></svg></span><span class="ab" style="left:44px;width:23px;background:#18bc9c"><svg width="12" height="12" viewBox="0 0 12 12" fill="currentColor"  style="display:block"><path d="M9 .3l2.7 2.7-7.6 7.6-2.7-2.7zM1 8.5l2.5 2.5L0 12z" fill="#fff"/></svg></span><span class="ab" style="left:70px;width:22px;background:#f75444"><svg width="10" height="12" viewBox="0 0 11 13" fill="currentColor"  style="display:block"><path d="M3.6 0h3.8l.5 1.4H11v1.4H0V1.4h3.1zM.8 3.6h9.4l-.7 9.4h-8z" fill="#fff"/><g fill="#f75444"><rect x="3" y="5" width="1" height="6"/><rect x="5" y="5" width="1" height="6"/><rect x="7" y="5" width="1" height="6"/></g></svg></span></div><div class="fr" style="top:89px;background:#fff"><span class="ab" style="left:16px;width:24px;background:#7e8299"><svg width="14" height="14" viewBox="0 0 14 14" fill="currentColor"  style="display:block"><path d="M7 0l3 3H8v3h3V4l3 3-3 3V8H8v3h2l-3 3-3-3h2V8H3v2L0 7l3-3v2h3V3H4z" fill="#fff"/></svg></span><span class="ab" style="left:44px;width:23px;background:#18bc9c"><svg width="12" height="12" viewBox="0 0 12 12" fill="currentColor"  style="display:block"><path d="M9 .3l2.7 2.7-7.6 7.6-2.7-2.7zM1 8.5l2.5 2.5L0 12z" fill="#fff"/></svg></span><span class="ab" style="left:70px;width:22px;background:#f75444"><svg width="10" height="12" viewBox="0 0 11 13" fill="currentColor"  style="display:block"><path d="M3.6 0h3.8l.5 1.4H11v1.4H0V1.4h3.1zM.8 3.6h9.4l-.7 9.4h-8z" fill="#fff"/><g fill="#f75444"><rect x="3" y="5" width="1" height="6"/><rect x="5" y="5" width="1" height="6"/><rect x="7" y="5" width="1" height="6"/></g></svg></span></div><div class="fr" style="top:136px;background:#f9f9f9"><span class="ab" style="left:16px;width:24px;background:#7e8299"><svg width="14" height="14" viewBox="0 0 14 14" fill="currentColor"  style="display:block"><path d="M7 0l3 3H8v3h3V4l3 3-3 3V8H8v3h2l-3 3-3-3h2V8H3v2L0 7l3-3v2h3V3H4z" fill="#fff"/></svg></span><span class="ab" style="left:44px;width:23px;background:#18bc9c"><svg width="12" height="12" viewBox="0 0 12 12" fill="currentColor"  style="display:block"><path d="M9 .3l2.7 2.7-7.6 7.6-2.7-2.7zM1 8.5l2.5 2.5L0 12z" fill="#fff"/></svg></span><span class="ab" style="left:70px;width:22px;background:#f75444"><svg width="10" height="12" viewBox="0 0 11 13" fill="currentColor"  style="display:block"><path d="M3.6 0h3.8l.5 1.4H11v1.4H0V1.4h3.1zM.8 3.6h9.4l-.7 9.4h-8z" fill="#fff"/><g fill="#f75444"><rect x="3" y="5" width="1" height="6"/><rect x="5" y="5" width="1" height="6"/><rect x="7" y="5" width="1" height="6"/></g></svg></span></div><div class="fr" style="top:183px;background:#fff"><span class="ab" style="left:16px;width:24px;background:#7e8299"><svg width="14" height="14" viewBox="0 0 14 14" fill="currentColor"  style="display:block"><path d="M7 0l3 3H8v3h3V4l3 3-3 3V8H8v3h2l-3 3-3-3h2V8H3v2L0 7l3-3v2h3V3H4z" fill="#fff"/></svg></span><span class="ab" style="left:44px;width:23px;background:#18bc9c"><svg width="12" height="12" viewBox="0 0 12 12" fill="currentColor"  style="display:block"><path d="M9 .3l2.7 2.7-7.6 7.6-2.7-2.7zM1 8.5l2.5 2.5L0 12z" fill="#fff"/></svg></span><span class="ab" style="left:70px;width:22px;background:#f75444"><svg width="10" height="12" viewBox="0 0 11 13" fill="currentColor"  style="display:block"><path d="M3.6 0h3.8l.5 1.4H11v1.4H0V1.4h3.1zM.8 3.6h9.4l-.7 9.4h-8z" fill="#fff"/><g fill="#f75444"><rect x="3" y="5" width="1" height="6"/><rect x="5" y="5" width="1" height="6"/><rect x="7" y="5" width="1" height="6"/></g></svg></span></div><div class="fr" style="top:230px;background:#f9f9f9"><span class="ab" style="left:16px;width:24px;background:#7e8299"><svg width="14" height="14" viewBox="0 0 14 14" fill="currentColor"  style="display:block"><path d="M7 0l3 3H8v3h3V4l3 3-3 3V8H8v3h2l-3 3-3-3h2V8H3v2L0 7l3-3v2h3V3H4z" fill="#fff"/></svg></span><span class="ab" style="left:44px;width:23px;background:#18bc9c"><svg width="12" height="12" viewBox="0 0 12 12" fill="currentColor"  style="display:block"><path d="M9 .3l2.7 2.7-7.6 7.6-2.7-2.7zM1 8.5l2.5 2.5L0 12z" fill="#fff"/></svg></span><span class="ab" style="left:70px;width:22px;background:#f75444"><svg width="10" height="12" viewBox="0 0 11 13" fill="currentColor"  style="display:block"><path d="M3.6 0h3.8l.5 1.4H11v1.4H0V1.4h3.1zM.8 3.6h9.4l-.7 9.4h-8z" fill="#fff"/><g fill="#f75444"><rect x="3" y="5" width="1" height="6"/><rect x="5" y="5" width="1" height="6"/><rect x="7" y="5" width="1" height="6"/></g></svg></span></div><div class="fr" style="top:277px;background:#fff"><span class="ab" style="left:16px;width:24px;background:#7e8299"><svg width="14" height="14" viewBox="0 0 14 14" fill="currentColor"  style="display:block"><path d="M7 0l3 3H8v3h3V4l3 3-3 3V8H8v3h2l-3 3-3-3h2V8H3v2L0 7l3-3v2h3V3H4z" fill="#fff"/></svg></span><span class="ab" style="left:44px;width:23px;background:#18bc9c"><svg width="12" height="12" viewBox="0 0 12 12" fill="currentColor"  style="display:block"><path d="M9 .3l2.7 2.7-7.6 7.6-2.7-2.7zM1 8.5l2.5 2.5L0 12z" fill="#fff"/></svg></span><span class="ab" style="left:70px;width:22px;background:#f75444"><svg width="10" height="12" viewBox="0 0 11 13" fill="currentColor"  style="display:block"><path d="M3.6 0h3.8l.5 1.4H11v1.4H0V1.4h3.1zM.8 3.6h9.4l-.7 9.4h-8z" fill="#fff"/><g fill="#f75444"><rect x="3" y="5" width="1" height="6"/><rect x="5" y="5" width="1" height="6"/><rect x="7" y="5" width="1" height="6"/></g></svg></span></div><div class="fr" style="top:324px;background:#f9f9f9"><span class="ab" style="left:16px;width:24px;background:#7e8299"><svg width="14" height="14" viewBox="0 0 14 14" fill="currentColor"  style="display:block"><path d="M7 0l3 3H8v3h3V4l3 3-3 3V8H8v3h2l-3 3-3-3h2V8H3v2L0 7l3-3v2h3V3H4z" fill="#fff"/></svg></span><span class="ab" style="left:44px;width:23px;background:#18bc9c"><svg width="12" height="12" viewBox="0 0 12 12" fill="currentColor"  style="display:block"><path d="M9 .3l2.7 2.7-7.6 7.6-2.7-2.7zM1 8.5l2.5 2.5L0 12z" fill="#fff"/></svg></span><span class="ab" style="left:70px;width:22px;background:#f75444"><svg width="10" height="12" viewBox="0 0 11 13" fill="currentColor"  style="display:block"><path d="M3.6 0h3.8l.5 1.4H11v1.4H0V1.4h3.1zM.8 3.6h9.4l-.7 9.4h-8z" fill="#fff"/><g fill="#f75444"><rect x="3" y="5" width="1" height="6"/><rect x="5" y="5" width="1" height="6"/><rect x="7" y="5" width="1" height="6"/></g></svg></span></div><div class="fr" style="top:371px;background:#fff"><span class="ab" style="left:16px;width:24px;background:#7e8299"><svg width="14" height="14" viewBox="0 0 14 14" fill="currentColor"  style="display:block"><path d="M7 0l3 3H8v3h3V4l3 3-3 3V8H8v3h2l-3 3-3-3h2V8H3v2L0 7l3-3v2h3V3H4z" fill="#fff"/></svg></span><span class="ab" style="left:44px;width:23px;background:#18bc9c"><svg width="12" height="12" viewBox="0 0 12 12" fill="currentColor"  style="display:block"><path d="M9 .3l2.7 2.7-7.6 7.6-2.7-2.7zM1 8.5l2.5 2.5L0 12z" fill="#fff"/></svg></span><span class="ab" style="left:70px;width:22px;background:#f75444"><svg width="10" height="12" viewBox="0 0 11 13" fill="currentColor"  style="display:block"><path d="M3.6 0h3.8l.5 1.4H11v1.4H0V1.4h3.1zM.8 3.6h9.4l-.7 9.4h-8z" fill="#fff"/><g fill="#f75444"><rect x="3" y="5" width="1" height="6"/><rect x="5" y="5" width="1" height="6"/><rect x="7" y="5" width="1" height="6"/></g></svg></span></div><div class="fr" style="top:418px;background:#f9f9f9"><span class="ab" style="left:16px;width:24px;background:#7e8299"><svg width="14" height="14" viewBox="0 0 14 14" fill="currentColor"  style="display:block"><path d="M7 0l3 3H8v3h3V4l3 3-3 3V8H8v3h2l-3 3-3-3h2V8H3v2L0 7l3-3v2h3V3H4z" fill="#fff"/></svg></span><span class="ab" style="left:44px;width:23px;background:#18bc9c"><svg width="12" height="12" viewBox="0 0 12 12" fill="currentColor"  style="display:block"><path d="M9 .3l2.7 2.7-7.6 7.6-2.7-2.7zM1 8.5l2.5 2.5L0 12z" fill="#fff"/></svg></span><span class="ab" style="left:70px;width:22px;background:#f75444"><svg width="10" height="12" viewBox="0 0 11 13" fill="currentColor"  style="display:block"><path d="M3.6 0h3.8l.5 1.4H11v1.4H0V1.4h3.1zM.8 3.6h9.4l-.7 9.4h-8z" fill="#fff"/><g fill="#f75444"><rect x="3" y="5" width="1" height="6"/><rect x="5" y="5" width="1" height="6"/><rect x="7" y="5" width="1" height="6"/></g></svg></span></div><div class="fr" style="top:465px;background:#fff"><span class="ab" style="left:16px;width:24px;background:#7e8299"><svg width="14" height="14" viewBox="0 0 14 14" fill="currentColor"  style="display:block"><path d="M7 0l3 3H8v3h3V4l3 3-3 3V8H8v3h2l-3 3-3-3h2V8H3v2L0 7l3-3v2h3V3H4z" fill="#fff"/></svg></span><span class="ab" style="left:44px;width:23px;background:#18bc9c"><svg width="12" height="12" viewBox="0 0 12 12" fill="currentColor"  style="display:block"><path d="M9 .3l2.7 2.7-7.6 7.6-2.7-2.7zM1 8.5l2.5 2.5L0 12z" fill="#fff"/></svg></span><span class="ab" style="left:70px;width:22px;background:#f75444"><svg width="10" height="12" viewBox="0 0 11 13" fill="currentColor"  style="display:block"><path d="M3.6 0h3.8l.5 1.4H11v1.4H0V1.4h3.1zM.8 3.6h9.4l-.7 9.4h-8z" fill="#fff"/><g fill="#f75444"><rect x="3" y="5" width="1" height="6"/><rect x="5" y="5" width="1" height="6"/><rect x="7" y="5" width="1" height="6"/></g></svg></span></div></div></div><div id="sbar" style="left:15px;top:637px"><span class="sl"></span><span class="thumb"></span><span class="sr"></span></div><div id="pinfo" style="left:15px;top:666px">显示第 1 到第 10 条记录，总共 34 条记录 每页显示 <span class="psz">10 <b></b></span> 条记录</div><div id="pgn"><span class="pg" style="left:0;width:66px">上一页</span><span class="pg on" style="left:66px;width:34px">1</span><span class="pg" style="left:100px;width:32px">2</span><span class="pg" style="left:132px;width:33px">3</span><span class="pg" style="left:165px;width:33px">4</span><span class="pg" style="left:198px;width:67px">下一页</span></div><div id="pjump" style="left:1538px"></div><div id="pjbtn" style="left:1594px">跳转</div></div></body></html>
